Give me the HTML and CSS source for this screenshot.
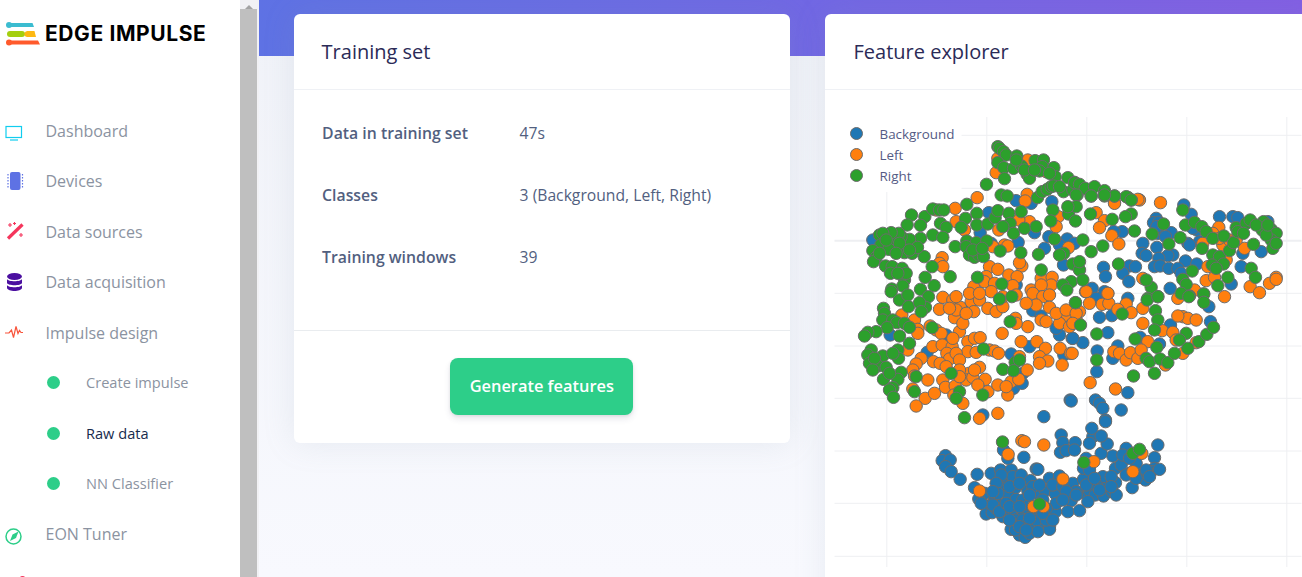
FILE: index.html
```html
<!DOCTYPE html>
<html lang="en">
<head>
    <meta charset="UTF-8">
    <meta name="viewport" content="width=device-width, initial-scale=1.0">
    <title>Edge Impulse - Raw data</title>
    <link rel="stylesheet" href="styles.css">
</head>
<body>
    <aside class="sidebar">
        <div class="brand">
            <svg class="logo" width="36" height="26" viewBox="0 0 36 26">
                <circle cx="3" cy="3" r="3" fill="#3bbcd0"/>
                <path d="M3 1h23.5l1.5 4H3z" fill="#3bbcd0"/>
                <rect x="1" y="9" width="18" height="6" rx="3" fill="#a4cf10"/>
                <path d="M22 9h6.5l1.5 6h-9a3 3 0 0 1 1-6z" fill="#fdb813"/>
                <circle cx="3" cy="20.5" r="3" fill="#ff5a2c"/>
                <path d="M3 18.500h29l2 4H3z" fill="#ff5a2c"/>
            </svg>
            <span class="brand-name">EDGE IMPULSE</span>
        </div>
        <ul class="nav">
            <li class="nav-item">
                <svg class="nav-icon" width="18" height="18" viewBox="0 0 18 18">
                    <rect x="1" y="4.500" width="15.500" height="11" fill="none" stroke="#11cdef" stroke-width="1.200"/>
                    <path d="M5 18h8" stroke="#11cdef" stroke-width="1.200"/>
                </svg>
                Dashboard
            </li>
            <li class="nav-item">
                <svg class="nav-icon" width="18" height="18" viewBox="0 0 18 18">
                    <rect x="5" y="0" width="10.500" height="18" rx="2" fill="#5e72e4"/>
                    <path d="M3 2v14M17.500 2v14" stroke="#5e72e4" stroke-width="1.200" stroke-dasharray="1.500 1.500"/>
                </svg>
                Devices
            </li>
            <li class="nav-item">
                <svg class="nav-icon" width="18" height="18" viewBox="0 0 18 18">
                    <path d="M3 15.500L17.500 1.500" stroke="#f5365c" stroke-width="3.200"/>
                    <path d="M5 0v4M3 2h4M9.500 -1v3M8 .5h3M16 10v4M14 12h4" stroke="#f5365c" stroke-width="1.100"/>
                </svg>
                Data sources
            </li>
            <li class="nav-item">
                <svg class="nav-icon" width="18" height="18" viewBox="0 0 18 18">
                    <ellipse cx="9.500" cy="3.500" rx="7.500" ry="3.500" fill="#4b0fa0"/>
                    <path d="M2 6c1 3 14 3 15 0v4c-1 3-14 3-15 0z" fill="#4b0fa0"/>
                    <path d="M2 12c1 3 14 3 15 0v3c-1 4-14 4-15 0z" fill="#4b0fa0"/>
                </svg>
                Data acquisition
            </li>
            <li class="nav-item">
                <svg class="nav-icon" width="18" height="18" viewBox="0 0 18 18">
                    <path d="M0 9h4l2.500-3 2 7.500L11 2.500l2 7 1.500-3 1.500 2h2" fill="none" stroke="#f8553c" stroke-width="1.200"/>
                </svg>
                Impulse design
            </li>
            <li class="nav-item sub"><span class="dot"></span>Create impulse</li>
            <li class="nav-item sub active"><span class="dot"></span>Raw data</li>
            <li class="nav-item sub"><span class="dot"></span>NN Classifier</li>
            <li class="nav-item">
                <svg class="nav-icon" width="18" height="18" viewBox="0 0 18 18">
                    <circle cx="8.500" cy="11.500" r="7.500" fill="none" stroke="#2dce89" stroke-width="1.500"/>
                    <path d="M13.500 6.500L11 13l-6 3 2.500-6.500z" fill="#2dce89"/>
                </svg>
                EON Tuner
            </li>
            <li class="nav-item">
                <svg class="nav-icon" width="18" height="18" viewBox="0 0 18 18">
                    <path d="M17.500 0a3 3 0 0 1 3 3v3h-6V3a3 3 0 0 1 3-3z" fill="#f5365c"/>
                </svg>
                Retrain model
            </li>
        </ul>
    </aside>

    <div class="scrollbar">
        <div class="scroll-arrow"></div>
        <div class="scroll-thumb"></div>
    </div>

    <main class="main">
        <section class="card">
            <h2 class="card-header">Training set</h2>
            <div class="stats">
                <span class="stat-label">Data in training set</span><span>47s</span>
                <span class="stat-label">Classes</span><span>3 (Background, Left, Right)</span>
                <span class="stat-label">Training windows</span><span>39</span>
            </div>
            <div class="card-footer">
                <button class="btn-generate" type="button">Generate features</button>
            </div>
        </section>

        <section class="card card-plot">
            <h2 class="card-header">Feature explorer</h2>
            <svg class="plot" width="496" height="487" viewBox="825.500 90 496 487">
                <g id="grid"></g>
                <g id="points"></g>
                <g class="legend">
                    <circle class="blue" cx="857" cy="133.500" r="6"/>
                    <circle class="orange" cx="857" cy="154.500" r="6"/>
                    <circle class="green" cx="857" cy="175.500" r="6"/>
                    <text x="880" y="138.500">Background</text>
                    <text x="880" y="159.500">Left</text>
                    <text x="880" y="180.500">Right</text>
                </g>
            </svg>
        </section>
    </main>

    <script src="plot.js"></script>
</body>
</html>
```

FILE: styles.css
```css
/* Global Styles */
* {
    box-sizing: border-box;
}

body {
    font-family: 'Open Sans', sans-serif;
    margin: 0;
    height: 100vh;
    display: flex;
    overflow: hidden;
    background-color: #fff;
}

/* Sidebar */
.sidebar {
    width: 240px;
    flex-shrink: 0;
    background-color: #fff;
}

.brand {
    height: 105.85px;
    padding: 22px 0 0 6px;
    display: flex;
    align-items: flex-start;
    gap: 3px;
}

.brand-name {
    font-family: 'Inter', sans-serif;
    font-weight: 700;
    font-size: 21px;
    line-height: 24px;
    color: #000;
    letter-spacing: 0.6px;
}

.nav {
    list-style: none;
    margin: 0;
    padding: 0;
}

.nav-item {
    height: 50.4px;
    padding-left: 5px;
    display: flex;
    align-items: center;
    font-size: 16px;
    color: #8b93a1;
}

.nav-icon {
    margin-right: 22.5px;
    flex-shrink: 0;
    overflow: visible;
}

.nav-item.sub {
    padding-left: 47px;
    font-size: 14.6px;
    line-height: 19px;
}

.nav-item.active {
    color: #172b4d;
}

.dot {
    width: 13px;
    height: 13px;
    margin-right: 26px;
    border-radius: 50%;
    background-color: #2dce89;
}

/* Fake window scrollbar */
.scrollbar {
    width: 19px;
    flex-shrink: 0;
    display: flex;
    flex-direction: column;
    background-color: #f1f1f4;
}

.scroll-arrow {
    width: 17px;
    height: 9px;
    display: flex;
    justify-content: center;
}

.scroll-arrow::before {
    content: "";
    border: 4px solid transparent;
    border-top-width: 0;
    border-bottom: 4px solid #a3a3a3;
}

.scroll-thumb {
    flex: 1;
    width: 17px;
    background-color: #bfbfbf;
}

/* Main */
.main {
    flex: 1;
    min-width: 0;
    padding: 14px 0 0 34.6px;
    display: flex;
    align-items: flex-start;
    gap: 35.5px;
    overflow: hidden;
    background:
        linear-gradient(87deg, #5e72e4, #825ee4) top / 100% 56px no-repeat,
        linear-gradient(180deg, #f0f2f8, #f8f9fe);
}

.card {
    width: 496.4px;
    flex-shrink: 0;
    background-color: #fff;
    border-radius: 6px;
    box-shadow: 0 0 32px rgba(136, 152, 170, 0.15);
}

.card-header {
    margin: 0;
    height: 76px;
    padding-left: 28px;
    display: flex;
    align-items: center;
    font-size: 20px;
    font-weight: 500;
    color: #2b2b57;
    border-bottom: 1px solid #eff1f5;
}

.stats {
    padding: 12px 28.5px 42px;
    display: grid;
    grid-template-columns: 197.5px 1fr;
    grid-auto-rows: 62px;
    align-items: center;
    font-size: 15.7px;
    color: #525f7f;
}

.stat-label {
    font-size: 15.8px;
    font-weight: 600;
}

.card-footer {
    padding: 27px 0 28px;
    display: flex;
    justify-content: center;
    border-top: 1px solid #e9ecef;
}

.btn-generate {
    width: 183px;
    height: 57px;
    padding: 0 0 2px;
    border: none;
    border-radius: 8px;
    font-family: inherit;
    font-size: 16.4px;
    font-weight: 600;
    color: #fff;
    background-color: #2dce89;
    box-shadow: 0 4px 6px rgba(50, 50, 93, 0.11), 0 1px 3px rgba(0, 0, 0, 0.08);
}

/* Plot */
.card-plot {
    height: 700px;
}

.plot {
    display: block;
}

.plot circle {
    stroke: #6b6b6b;
    stroke-width: 1;
}

.plot .blue {
    fill: #1f77b4;
}

.plot .orange {
    fill: #ff7f0e;
}

.plot .green {
    fill: #2ca02c;
}

.legend text {
    font-size: 13.4px;
    fill: #555b85;
}
```

FILE: plot.js
```js
// t-SNE points read off as [crop x, crop y] at 3x, per crop offset
const crops = {
    blue: [
        [860, 140, "40,300 388,218 470,182 515,190 577,185 362,278 476,307 525,278 568,290 623,297 555,325 612,375 600,315 645,310 395,310 470,435"],
        [1080, 190, "313,45 335,73 230,85 222,98 238,97 275,128 235,130 190,160 232,172 188,190 200,197 280,195 265,197 238,205 318,213 352,222 225,230 242,228 268,235 295,235 305,250 360,155 325,160 330,165 485,230 455,282 460,80 475,83 565,95 545,185 490,190 150,228 168,230 130,250 72,232 78,260 148,275 128,125 103,125 232,110 258,140 272,295 145,325 75,305 38,295 50,325 420,80 352,120 340,115"],
        [860, 290, "92,135 203,187 260,135 455,192 510,170 490,250 462,295 488,280 370,375 520,62 545,78 632,330 553,380 638,145 600,135 590,115 613,195"],
        [1070, 290, "90,82 127,77 40,158 10,145 115,128 83,183 82,245 175,308 78,330 90,340 100,355 155,360 108,390 5,333 212,142 145,168 130,205 270,162 303,105 423,95 418,50"],
        [930, 420, "48,107 38,122 62,120 48,140 65,155 92,178 143,163 185,160 213,150 245,150 222,177 215,185 250,170 275,165 320,147 325,148 360,175 390,168 303,182 258,203 225,205 235,225 260,238 295,212 320,220 348,212 378,222 370,195 430,190 462,178 458,218 425,242 480,212 497,225 522,228 548,215 528,195 520,170 558,188 558,145 575,135 550,108 590,85 515,100 533,72 490,50 515,48 487,25 395,45 400,68 437,68 393,97 410,92 435,90 480,70 470,115 462,145 480,150 528,5 222,90 235,115 283,112 580,105 620,130 600,115 675,113 685,75 675,145 635,165 648,180 665,155 690,148 608,203 135,203 165,220 148,237 195,240 218,253 170,257 170,282 220,290 245,285 258,300 280,272 300,270 320,282 345,295 378,275 380,250 415,275 450,272 475,245 300,310 245,328 270,345 287,352 300,340 335,320 360,320 360,328 258,330 188,278 215,165 240,200 280,240 310,200 340,240 400,200 440,215 500,195 545,170 240,300 280,300 320,300 200,265 300,255 350,265 270,320 325,335 350,300 190,255 210,275 600,160 650,150 660,170 200,190 230,250 270,190 300,225 330,195 410,215 400,240 440,225 470,195 510,210 560,225 590,165 620,175 545,200 495,175 205,220 155,250 190,215 240,260 270,260 300,295 340,280 370,300 290,330"]
    ],
    orange: [
        [860, 140, "353,173 287,205 503,163 497,183 505,60 415,55 410,98 560,95 230,210 290,245 315,270 418,270 510,245 478,240 596,230 590,260 248,353 240,370 250,380 435,315 445,318 400,320 487,378 480,368 390,380 415,388 448,405 473,410 380,410 343,440 375,425 405,430 460,437 515,450 545,415 578,412 575,435 627,323 545,435"],
        [820, 0, "885,608 960,600"],
        [1080, 190, "243,38 175,28 105,40 50,68 75,92 60,113 97,137 118,162 418,112 400,130 430,165 495,175 370,160 385,230 440,210 380,272 405,262 590,262 570,280 590,268 512,290 540,308 435,320 345,300 190,265 18,305 85,310 295,325 450,150 470,150 420,145"],
        [860, 290, "127,75 165,90 175,118 175,130 145,180 212,108 230,120 245,130 300,125 222,215 220,170 248,165 278,170 280,145 262,190 325,155 345,145 362,143 325,185 350,187 390,180 405,183 417,190 270,207 242,220 185,205 170,222 160,240 165,258 205,270 160,297 197,325 225,310 170,348 250,270 258,292 287,288 283,315 310,340 328,250 360,232 320,270 340,262 377,268 355,285 385,305 415,285 445,315 455,275 478,268 503,240 428,130 485,155 532,155 558,175 540,200 565,213 540,220 608,225 602,175 633,190 468,85 505,110 470,100 545,90 560,95 605,85 620,85 650,90 600,100 250,22 280,30 240,58 303,52 285,83 310,100 335,35 360,30 343,65 385,55 410,65 430,50 330,10 395,5 520,10 550,20 570,15 530,45 570,52 480,200 360,385 415,370 290,190 300,210 260,230 300,240 345,240 300,260 440,290 590,70 630,110 660,65 620,60 500,40 290,60 320,70 360,10 430,20 470,15 290,20 270,55"],
        [1070, 290, "98,43 118,40 170,42 145,58 185,68 220,100 220,55 50,5 115,10 8,190 62,278 138,297 235,155 133,185 150,190 170,210 183,188 205,205 215,180 288,225 340,80 355,85 380,90 325,78 278,122 310,127 320,150 380,158 340,190 20,70 10,100 60,40"],
        [930, 420, "277,62 285,65 343,75 236,103 150,213 400,177 312,260 342,260 493,125 610,155 637,100"]
    ],
    green: [
        [860, 140, "415,20 420,25 432,35 440,45 472,48 415,68 433,83 462,85 486,78 527,62 552,60 548,80 540,93 503,103 510,115 583,83 587,110 435,116 381,133 425,165 443,168 534,173 548,155 563,148 575,140 582,138 612,155 625,113 645,127 658,140 653,165 627,203 627,222 648,243 580,210 574,243 322,193 352,220 318,235 352,255 305,262 385,252 407,233 415,212 448,220 485,215 495,265 452,250 430,260 462,280 530,260 156,225 196,230 220,207 240,210 253,210 143,255 183,256 243,250 260,262 220,285 250,292 183,295 150,298 125,290 60,285 100,305 118,280 95,278 70,280 64,315 88,328 40,332 50,352 42,365 78,378 98,380 128,385 93,400 135,338 158,340 194,350 174,322 218,380 197,412 272,410 135,420 130,438 97,447 183,448 224,437 287,320 322,303 350,308 320,320 382,303 422,333 330,345 345,352 358,345 372,350 484,338 537,343 585,297 613,340 600,345 640,372 635,425 610,435 660,390 545,390 354,412 427,432 80,300 120,310 150,330 110,340 60,340 140,400 115,400 340,330 368,325 470,60 495,90 525,90 570,100 600,140 640,150"],
        [820, 0, "765,548 780,553 797,565 825,560 855,572 855,588 885,588 925,592 935,600 815,588 770,585 770,620 745,620"],
        [1080, 190, "33,72 98,88 10,150 35,185 70,168 165,123 218,132 155,72 138,80 140,20 155,30 105,18 75,15 35,18 310,60 252,102 318,105 345,97 367,110 380,125 400,145 433,138 302,143 268,162 368,175 400,195 420,200 450,182 462,158 398,225 432,222 410,235 515,235 528,262 445,262 470,113 500,100 512,90 475,125 492,130 552,95 548,120 575,118 590,130 575,150 580,175 590,160 522,163 338,243 310,268 320,283 415,287 372,312 330,318 235,320 215,292 200,270 205,325 117,222 10,270 0,215 530,105 560,135 565,105"],
        [860, 290, "95,5 120,30 145,15 147,50 207,20 198,52 180,38 185,65 72,55 75,70 70,90 100,90 112,98 83,113 135,100 150,112 120,138 50,125 25,127 15,138 150,160 218,113 35,180 115,180 117,205 70,198 25,195 30,220 55,228 80,232 72,268 125,247 115,268 100,293 90,300 102,322 170,260 275,250 165,305 300,305 290,325 370,315 372,177 430,238 467,217 480,210 462,242 452,95 420,27 457,20 648,38 622,0 315,383 45,205 100,190 40,240 90,250"],
        [1070, 290, "18,38 33,105 82,132 158,72 233,30 265,20 258,62 265,90 255,120 197,147 262,172 230,205 240,215 272,207 295,218 255,250 192,258 82,210 335,10 358,20 403,12 403,37 350,130 330,150 355,175 388,155 412,133 432,112 315,190"],
        [930, 420, "219,66 330,252 463,127 610,100 630,88"]
    ]
};

const svgNs = 'http://www.w3.org/2000/svg';

function drawGrid() {
    const grid = document.getElementById('grid');
    const line = (x1, y1, x2, y2, width) => {
        const el = document.createElementNS(svgNs, 'line');
        el.setAttribute('x1', x1);
        el.setAttribute('y1', y1);
        el.setAttribute('x2', x2);
        el.setAttribute('y2', y2);
        el.setAttribute('stroke', '#eeeff2');
        el.setAttribute('stroke-width', width);
        grid.appendChild(el);
    };
    [887.3, 987.3, 1087.3, 1187.3, 1287.3].forEach(x => line(x, x < 900 ? 192 : 117, x, 567, 1));
    [135.3, 188.3].forEach(y => line(962, y, 1302, y, 1));
    [240.8, 293.3, 346, 398.3, 451, 503.3, 556.3].forEach(y => line(835, y, 1302, y, y === 240.8 ? 2 : 1));
}

function drawPoints() {
    const group = document.getElementById('points');
    Object.keys(crops).forEach(colour => {
        crops[colour].forEach(([x0, y0, list]) => {
            list.split(' ').forEach(pair => {
                const [x, y] = pair.split(',').map(Number);
                const dot = document.createElementNS(svgNs, 'circle');
                dot.setAttribute('class', colour);
                dot.setAttribute('cx', x0 + x / 3);
                dot.setAttribute('cy', y0 + y / 3);
                dot.setAttribute('r', 6.2);
                group.appendChild(dot);
            });
        });
    });
}

drawGrid();
drawPoints();
```
